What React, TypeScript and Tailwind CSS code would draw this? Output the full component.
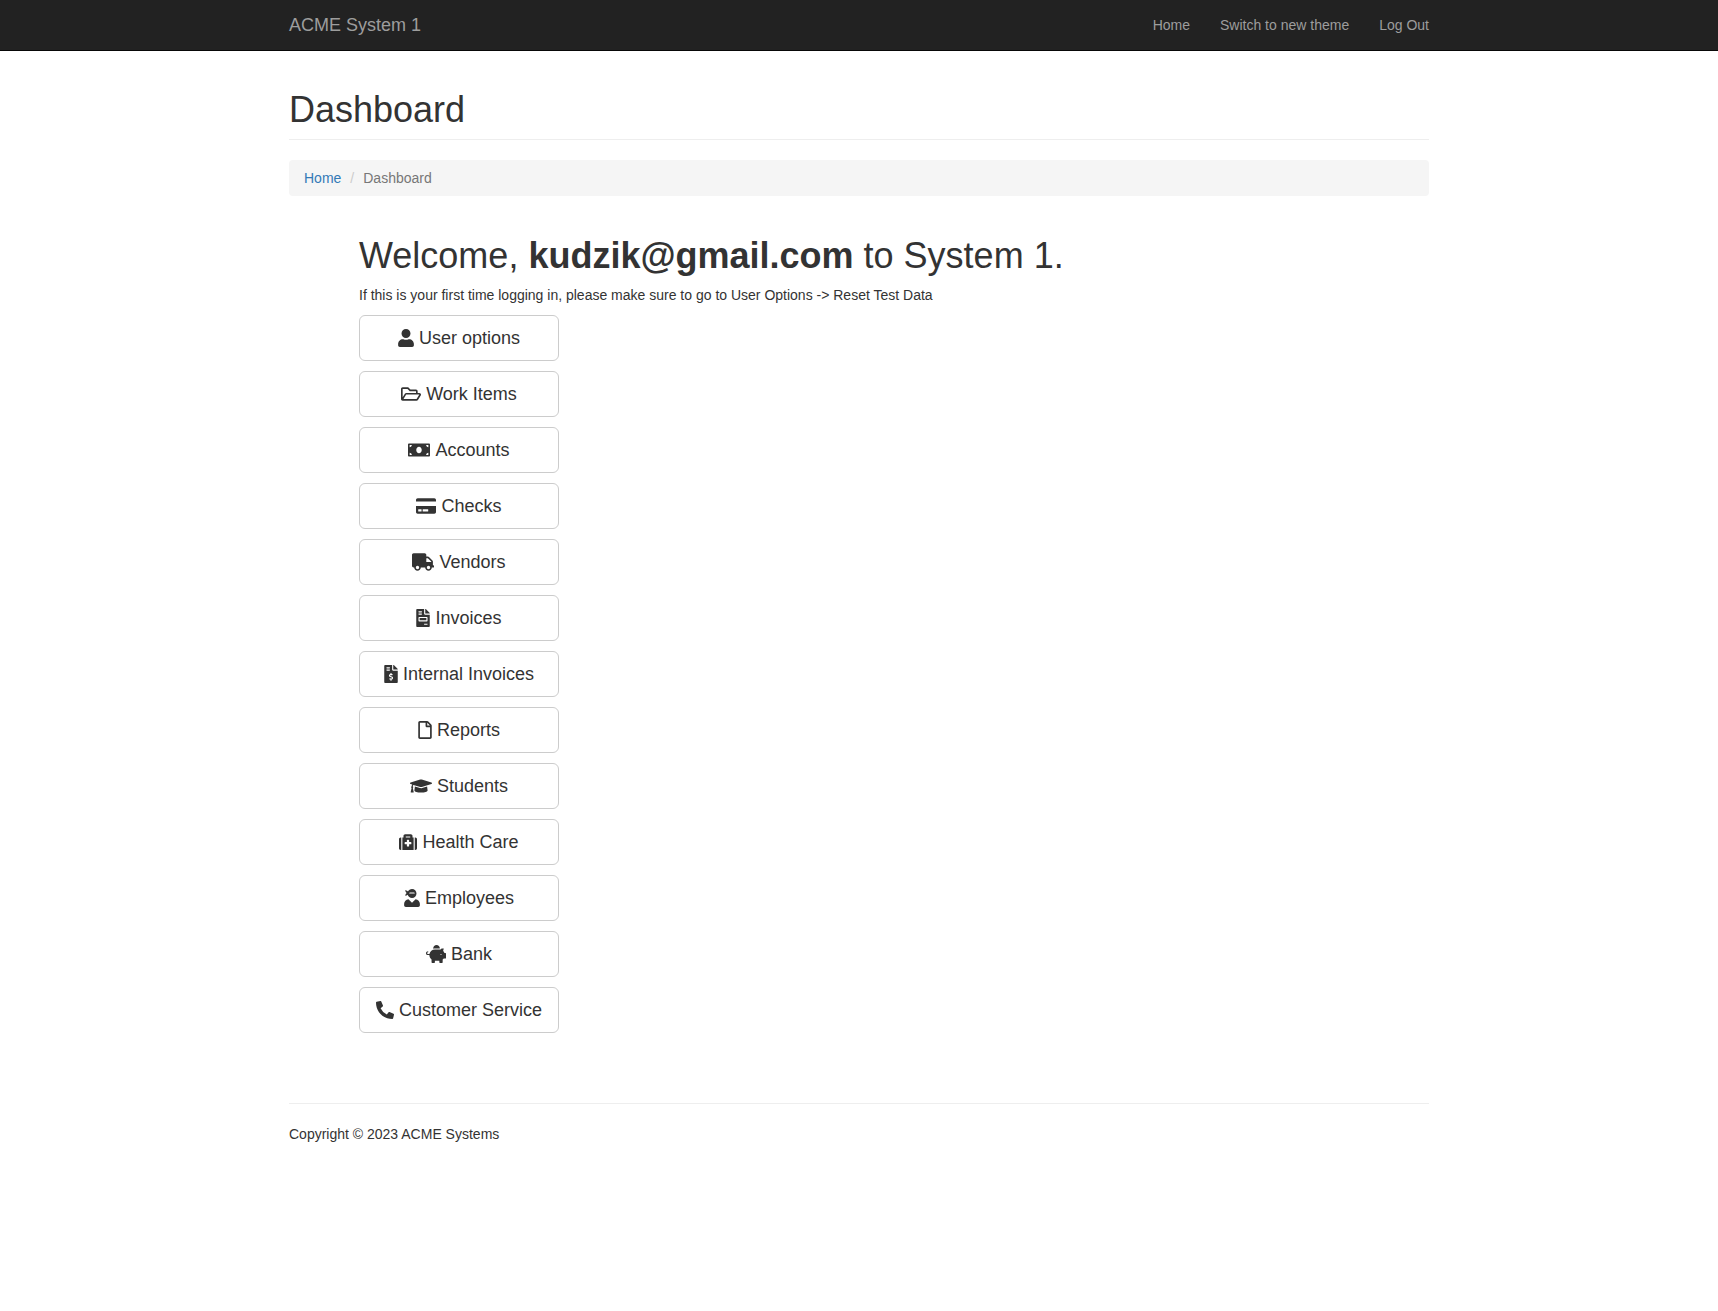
import type { IconType } from "react-icons";
import {
  FaUser,
  FaRegFolderOpen,
  FaMoneyBill,
  FaCreditCard,
  FaTruck,
  FaFileInvoice,
  FaFileInvoiceDollar,
  FaRegFile,
  FaGraduationCap,
  FaMedkit,
  FaUserNinja,
  FaPiggyBank,
  FaPhoneAlt,
} from "react-icons/fa";

const navLinks = ["Home", "Switch to new theme", "Log Out"];

// Each glyph keeps a common height; its width follows its own proportions.
const sections: { label: string; Icon: IconType; width: string }[] = [
  { label: "User options", Icon: FaUser, width: "w-[16px]" },
  { label: "Work Items", Icon: FaRegFolderOpen, width: "w-[20px]" },
  { label: "Accounts", Icon: FaMoneyBill, width: "w-[22px]" },
  { label: "Checks", Icon: FaCreditCard, width: "w-[20px]" },
  { label: "Vendors", Icon: FaTruck, width: "w-[22px]" },
  { label: "Invoices", Icon: FaFileInvoice, width: "w-[14px]" },
  { label: "Internal Invoices", Icon: FaFileInvoiceDollar, width: "w-[14px]" },
  { label: "Reports", Icon: FaRegFile, width: "w-[14px]" },
  { label: "Students", Icon: FaGraduationCap, width: "w-[22px]" },
  { label: "Health Care", Icon: FaMedkit, width: "w-[18px]" },
  { label: "Employees", Icon: FaUserNinja, width: "w-[16px]" },
  { label: "Bank", Icon: FaPiggyBank, width: "w-[20px]" },
  { label: "Customer Service", Icon: FaPhoneAlt, width: "w-[18px]" },
];

function NavBar() {
  return (
    <nav className="border-b border-[#080808] bg-[#222222] text-[#9d9d9d]">
      <div className="mx-auto flex max-w-[1170px] flex-wrap items-center justify-between px-[15px]">
        <a href="#" className="py-[15px] text-[18px] leading-5 hover:text-white">
          ACME System 1
        </a>
        <ul className="flex flex-wrap gap-x-[30px]">
          {navLinks.map((label) => (
            <li key={label}>
              <a href="#" className="block py-[15px] hover:text-white">
                {label}
              </a>
            </li>
          ))}
        </ul>
      </div>
    </nav>
  );
}

export default function App() {
  return (
    <div className="min-h-screen bg-white font-['Liberation_Sans',Arial,sans-serif] text-[14px] leading-5 text-[#333333]">
      <NavBar />
      <div className="mx-auto max-w-[1170px] px-[15px]">
        <header className="mt-[39px] mb-5 border-b border-[#eeeeee] pb-[9px]">
          <h1 className="text-[36px] leading-10">Dashboard</h1>
        </header>
        <ol className="flex rounded bg-[#f5f5f5] px-[15px] py-2">
          <li>
            <a href="#" className="text-[#337ab7] hover:underline">
              Home
            </a>
          </li>
          <li className="text-[#777777]" aria-current="page">
            <span className="px-[9px] text-[#cccccc]">/</span>
            Dashboard
          </li>
        </ol>
        <main className="mt-10 pl-[70px]">
          <h1 className="mb-[9px] text-[36px] leading-10">
            Welcome, <strong className="font-bold">kudzik@gmail.com</strong> to System 1.
          </h1>
          <p className="mb-[10px]">
            If this is your first time logging in, please make sure to go to User Options -&gt; Reset Test Data
          </p>
          <div className="flex flex-col items-start gap-[10px]">
            {sections.map(({ label, Icon, width }) => (
              <button
                key={label}
                type="button"
                className="flex w-[200px] items-center justify-center gap-[5px] rounded-md border border-[#cccccc] bg-white py-[10px] text-[18px] leading-6 whitespace-nowrap hover:bg-[#e6e6e6]"
              >
                <Icon className={`h-[18px] shrink-0 ${width}`} aria-hidden="true" />
                {label}
              </button>
            ))}
          </div>
        </main>
        <footer className="mt-[70px] border-t border-[#eeeeee] py-5">
          <p>Copyright © 2023 ACME Systems</p>
        </footer>
      </div>
    </div>
  );
}
